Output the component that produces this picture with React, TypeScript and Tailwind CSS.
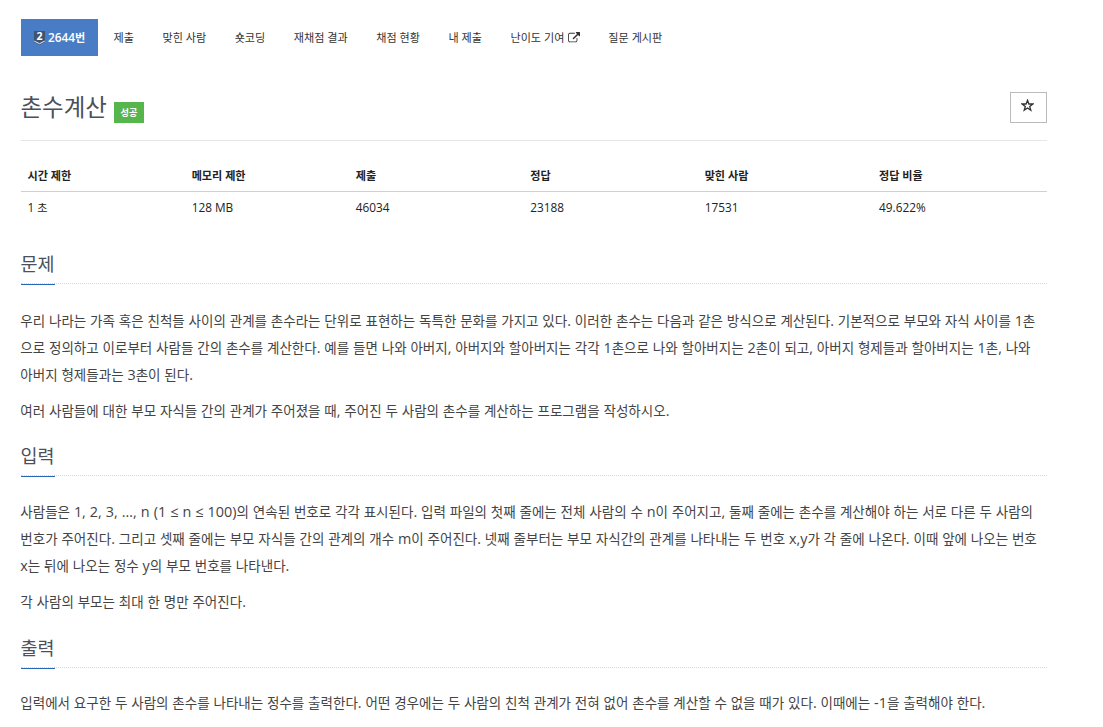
import { Fragment } from 'react';

const menu = ['제출', '맞힌 사람', '숏코딩', '재채점 결과', '채점 현황', '내 제출', '난이도 기여', '질문 게시판'];

const info = [
  { label: '시간 제한', value: '1 초', width: 'w-[16%]' },
  { label: '메모리 제한', value: '128 MB', width: 'w-[16%]' },
  { label: '제출', value: '46034', width: 'w-[17%]' },
  { label: '정답', value: '23188', width: 'w-[17%]' },
  { label: '맞힌 사람', value: '17531', width: 'w-[17%]' },
  { label: '정답 비율', value: '49.622%', width: 'w-[17%]' },
];

const sections = [
  {
    title: '문제',
    paragraphs: [
      [
        '우리 나라는 가족 혹은 친척들 사이의 관계를 촌수라는 단위로 표현하는 독특한 문화를 가지고 있다. 이러한 촌수는 다음과 같은 방식으로 계산된다. 기본적으로 부모와 자식 사이를 1촌',
        '으로 정의하고 이로부터 사람들 간의 촌수를 계산한다. 예를 들면 나와 아버지, 아버지와 할아버지는 각각 1촌으로 나와 할아버지는 2촌이 되고, 아버지 형제들과 할아버지는 1촌, 나와',
        '아버지 형제들과는 3촌이 된다.',
      ],
      ['여러 사람들에 대한 부모 자식들 간의 관계가 주어졌을 때, 주어진 두 사람의 촌수를 계산하는 프로그램을 작성하시오.'],
    ],
  },
  {
    title: '입력',
    paragraphs: [
      [
        '사람들은 1, 2, 3, …, n (1 ≤ n ≤ 100)의 연속된 번호로 각각 표시된다. 입력 파일의 첫째 줄에는 전체 사람의 수 n이 주어지고, 둘째 줄에는 촌수를 계산해야 하는 서로 다른 두 사람의',
        '번호가 주어진다. 그리고 셋째 줄에는 부모 자식들 간의 관계의 개수 m이 주어진다. 넷째 줄부터는 부모 자식간의 관계를 나타내는 두 번호 x,y가 각 줄에 나온다. 이때 앞에 나오는 번호',
        'x는 뒤에 나오는 정수 y의 부모 번호를 나타낸다.',
      ],
      ['각 사람의 부모는 최대 한 명만 주어진다.'],
    ],
  },
  {
    title: '출력',
    paragraphs: [
      ['입력에서 요구한 두 사람의 촌수를 나타내는 정수를 출력한다. 어떤 경우에는 두 사람의 친척 관계가 전혀 없어 촌수를 계산할 수 없을 때가 있다. 이때에는 -1을 출력해야 한다.'],
    ],
  },
];

// latin letters, digits and punctuation are set a little larger than hangul
function Mixed({ text }: { text: string }) {
  return (
    <>
      {text.split(/([!-~…≤]+(?: [!-~…≤]+)*)/).map((part, i) =>
        i % 2 ? (
          <span key={i} className="text-[1.065em]">{part}</span>
        ) : (
          <Fragment key={i}>{part}</Fragment>
        )
      )}
    </>
  );
}

function TierIcon() {
  return (
    <svg width="11" height="14" viewBox="0 0 11 14" className="shrink-0 overflow-visible">
      <path d="M0 0h11v11L5.5 14 0 11z" fill="#3f5470" />
      <path d="M0.3 10.1 5.5 12.7l5.2-2.6" fill="none" stroke="#fff" strokeWidth="0.9" />
      <text x="5.5" y="9" textAnchor="middle" fontSize="10.5" fontWeight="700" fill="#fff">2</text>
    </svg>
  );
}

function ExternalIcon() {
  return (
    <svg width="12" height="12" viewBox="0 0 1792 1792" fill="currentColor">
      <path d="M1408 928v320q0 119-84.5 203.5t-203.5 84.5h-832q-119 0-203.5-84.5t-84.5-203.5v-832q0-119 84.5-203.5t203.5-84.5h704q14 0 23 9t9 23v64q0 14-9 23t-23 9h-704q-66 0-113 47t-47 113v832q0 66 47 113t113 47h832q66 0 113-47t47-113v-320q0-14 9-23t23-9h64q14 0 23 9t9 23zm384-864v512q0 26-19 45t-45 19-45-19l-176-176-652 652q-10 10-23 10t-23-10l-114-114q-10-10-10-23t10-23l652-652-176-176q-19-19-19-45t19-45 45-19h512q26 0 45 19t19 45z" />
    </svg>
  );
}

function Section({ title, paragraphs }: { title: string; paragraphs: string[][] }) {
  return (
    <section className="group pb-[9px] first:pb-[8px] last:pb-0">
      <div className="mb-[22px] flex h-11 items-end border-b border-dotted border-[#d5d6e0] group-first:mb-[23px] group-last:mb-[21px]">
        <h2 className="-mb-[2px] border-b border-[#2a66b8] text-[18.5px] leading-[40px] text-[#4b505b]">
          <span className="-ml-[0.5px]">{title}</span>
        </h2>
      </div>
      {paragraphs.map((lines, i) => (
        <p key={i} className="mt-[9px] -ml-[0.7px] text-[13.53px] leading-[27px] [word-spacing:0.3px] first-of-type:mt-0">
          {lines.map((line) => (
            <span key={line} className="block h-[27px] whitespace-nowrap">
              <Mixed text={line} />
            </span>
          ))}
        </p>
      ))}
    </section>
  );
}

export default function App() {
  return (
    <div className="h-[727px] w-full overflow-hidden bg-white pt-[19px] pl-[21px] font-['Open_Sans','Noto_Sans_CJK_KR',sans-serif] text-[#444]">
      <div className="w-[1026px]">
        <nav className="flex h-[37px] items-center text-[11.1px] text-[#333]">
          <a className="flex h-full w-[77px] items-center justify-center gap-[3px] bg-[#487cc4] font-semibold text-white">
            <TierIcon />
            <span className="pt-px"><Mixed text="2644번" /></span>
          </a>
          <ul className="ml-[15.5px] flex items-center gap-[28.5px] pt-[2px] whitespace-nowrap">
            {menu.map((item) => (
              <li key={item} className="flex items-center gap-[3.5px]">
                {item}
                {item === '난이도 기여' && <ExternalIcon />}
              </li>
            ))}
          </ul>
        </nav>

        <header className="flex h-[85px] items-start justify-between border-b border-[#e6e6e6] pt-9">
          <div className="flex">
            <h1 className="-mt-px -ml-[0.5px] text-[23.5px] leading-[32px] text-[#4b505b]">촌수계산</h1>
            <span className="mt-[10px] ml-[7px] flex h-[21px] w-[30px] items-center justify-center bg-[#56b54b] pt-px text-[9.2px] font-bold text-white">성공</span>
          </div>
          <button className="flex h-[31px] w-[37px] items-center justify-center border border-[#bbb] pr-[2px] pb-[5px] text-[#333]">
            <svg width="13" height="13" viewBox="0 0 13 13">
              <path d="M6.5 1.3 7.9 5h3.9L8.7 7.4l1.1 3.9-3.3-2.3-3.3 2.3 1.1-3.9L1.2 5h3.9z" fill="none" stroke="currentColor" strokeWidth="1.3" />
            </svg>
          </button>
        </header>

        <table className="mt-[18px] w-full table-fixed text-left text-[11.1px] text-[#222]">
          <thead>
            <tr className="h-8 border-b border-[#d0d0d0]">
              {info.map((col) => (
                <th key={col.label} className={`${col.width} pt-1 pl-[6.5px] font-bold`}>{col.label}</th>
              ))}
            </tr>
          </thead>
          <tbody>
            <tr className="h-8">
              {info.map((col) => (
                <td key={col.label} className="pt-px pl-[6.5px]"><Mixed text={col.value} /></td>
              ))}
            </tr>
          </tbody>
        </table>

        <main className="mt-[17px]">
          {sections.map((section) => (
            <Section key={section.title} {...section} />
          ))}
        </main>
      </div>
    </div>
  );
}
